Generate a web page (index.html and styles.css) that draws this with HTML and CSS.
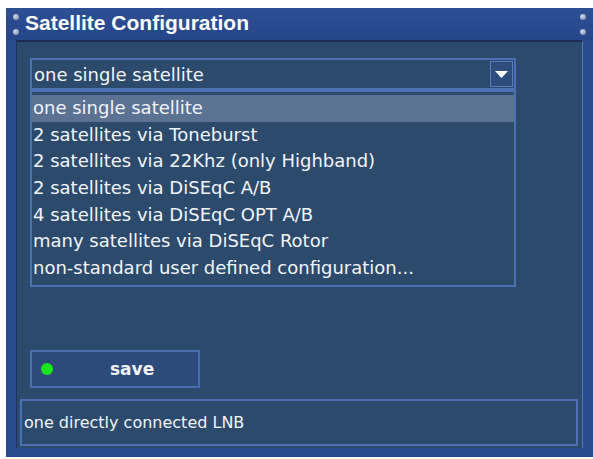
FILE: index.html
```html
<!DOCTYPE html>
<html>
  <head>
    <title>Satellite Configuration</title>
    <link rel="stylesheet" href="styles.css">
  </head>
  <body>
    <div class="window">
      <div class="titlebar">
        <div class="screws"><span class="screw"></span><span class="screw"></span></div>
        <div class="title">Satellite Configuration</div>
        <div class="screws right"><span class="screw"></span><span class="screw"></span></div>
      </div>
      <div class="content">
        <div class="select">
          <div class="select-head">
            <span class="select-value">one single satellite</span>
            <span class="arrow-box">
              <svg width="13" height="9" viewBox="0 0 13 9"><polygon points="0,1 13,1 6.5,8" fill="#ffffff"/></svg>
            </span>
          </div>
          <div class="list">
            <div class="item selected">one single satellite</div>
            <div class="item">2 satellites via Toneburst</div>
            <div class="item">2 satellites via 22Khz (only Highband)</div>
            <div class="item">2 satellites via DiSEqC A/B</div>
            <div class="item">4 satellites via DiSEqC OPT A/B</div>
            <div class="item">many satellites via DiSEqC Rotor</div>
            <div class="item">non-standard user defined configuration...</div>
          </div>
        </div>
        <div class="button">
          <span class="led"></span>
          <span class="button-label">save</span>
        </div>
        <div class="status">one directly connected LNB</div>
      </div>
    </div>
  </body>
</html>
```
FILE: styles.css
```css
body {
  margin: 0;
  background: #ffffff;
  font-family: "DejaVu Sans", Verdana, sans-serif;
  color: #f2f4f8;
}
.window {
  margin: 8px 0 0 6px;
  width: 587px;
  height: 449px;
  display: flex;
  flex-direction: column;
  background: #2a4a8e;
}
  .titlebar {
    height: 32px;
    display: flex;
    align-items: center;
    background: linear-gradient(#2d4f94, #26468a);
  }
  .screws {
    width: 19px;
    display: flex;
    flex-direction: column;
    align-items: center;
    gap: 9px;
  }
  .screws.right {
    width: 7px;
    margin-left: auto;
    margin-right: 7px;
  }
  .screw {
    width: 6px;
    height: 6px;
    border-radius: 50%;
    background: radial-gradient(circle at 35% 35%, #d4dae6, #7080a0);
  }
  .title {
    font-family: "Liberation Sans", Arial, sans-serif;
    font-weight: bold;
    font-size: 21px;
    color: #ffffff;
    margin-top: -2px;
  }
  .content {
    flex: 1;
    margin: 0 10px 9px 10px;
    background: #2c4a6c;
    border-top: 2px solid #1a2c52;
    border-left: 1px solid #1d3260;
    border-right: 1px solid #5677bb;
    display: flex;
    flex-direction: column;
  }
  .select {
    margin: 16px 0 0 13px;
    width: 486px;
  }
  .select-head {
    height: 28px;
    border: 2px solid #4d6fb5;
    display: flex;
    align-items: center;
    padding-left: 2px;
    font-size: 18px;
  }
  .arrow-box {
    margin-left: auto;
    margin-right: 1px;
    width: 21px;
    height: 24px;
    border: 1px solid #5a7bc0;
    background: #2e4d7c;
    display: flex;
    align-items: center;
    justify-content: center;
  }
  .list {
    border: 2px solid #4d6fb5;
    padding: 3px 0 3px 0;
    font-size: 18px;
  }
  .item {
    height: 26.7px;
    line-height: 26.7px;
    padding-left: 1px;
    white-space: nowrap;
  }
  .item.selected {
    background: #5b7293;
  }
  .button {
    margin: 63px 0 0 13px;
    width: 166px;
    height: 34px;
    border: 2px solid #4a6cb0;
    background: #2d4b7a;
    display: flex;
    align-items: center;
  }
  .led {
    width: 12px;
    height: 12px;
    border-radius: 50%;
    background: #19e619;
    margin-left: 9px;
  }
  .button-label {
    margin-left: 57px;
    font-size: 17px;
    font-weight: bold;
  }
  .status {
    margin: 11px 0 0 3px;
    width: 552px;
    height: 43px;
    border: 2px solid #4d6fb5;
    display: flex;
    align-items: center;
    padding-left: 2px;
    font-size: 16px;
  }
```
